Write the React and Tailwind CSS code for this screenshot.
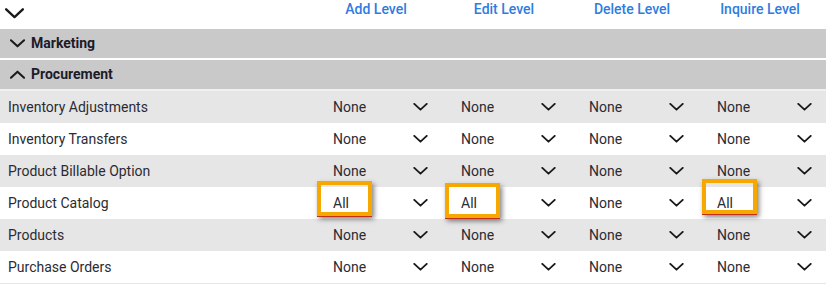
import React from 'react';

const FONT = { fontFamily: 'Roboto, "Liberation Sans", sans-serif' };

const LEVELS = ['Add Level', 'Edit Level', 'Delete Level', 'Inquire Level'];

const ROWS = [
    { name: 'Inventory Adjustments', values: ['None', 'None', 'None', 'None'] },
    { name: 'Inventory Transfers', values: ['None', 'None', 'None', 'None'] },
    { name: 'Product Billable Option', values: ['None', 'None', 'None', 'None'] },
    { name: 'Product Catalog', values: ['All', 'All', 'None', 'All'], marks: [[-8, -6], [-8, -4], null, [-7, -8]] },
    { name: 'Products', values: ['None', 'None', 'None', 'None'] },
    { name: 'Purchase Orders', values: ['None', 'None', 'None', 'None'] },
];

const Chevron = ({ up = false, className = '', width = 16, height = 9, stroke = 2 }) => (
    <svg width={width} height={height} viewBox="0 0 16 9" className={className} fill="none">
        <path
            d={up ? 'M1 8 L8 1.5 L15 8' : 'M1 1 L8 7.5 L15 1'}
            stroke="#1a1a1a"
            strokeWidth={stroke}
            strokeLinecap="round"
            strokeLinejoin="round"
        />
    </svg>
);

const Section = ({ title, open }) => (
    <div className="h-[29px] bg-[#c9c9c9] flex items-center pl-[10px] gap-[6px]">
        <Chevron up={open} width={15} height={9} stroke={2.2} />
        <span className="text-[14px] font-bold text-[#1b1b2b]">{title}</span>
    </div>
);

const Cell = ({ value, mark }) => (
    <div className="relative w-[128px] shrink-0 flex items-center justify-between pl-[8px] pr-[25px]">
        <span className="text-[14px] text-[#2b2b33]">{value}</span>
        <Chevron width={15} height={8} stroke={2.1} />
        {mark && (
            <div
                className="absolute w-[55px] h-[35px] border-4 border-[#f6a800] shadow-[2px_3px_5px_rgba(0,0,0,0.5)]"
                style={{ left: mark[0], top: mark[1] }}
            >
                <div className="absolute left-[-4px] right-[-4px] bottom-[-5px] h-[1px] bg-[#c0301a]" />
            </div>
        )}
    </div>
);

export default function App() {
    return (
        <div className="w-[826px] h-[284px] overflow-hidden bg-white" style={FONT}>
            {/* header */}
            <div className="h-[29px] flex">
                <div className="w-[325px] shrink-0 pl-[5px] pt-[8px]">
                    <Chevron width={19} height={11} stroke={2} />
                </div>
                {LEVELS.map(l => (
                    <div key={l} className="w-[128px] shrink-0">
                        <div className="w-[102px] text-center text-[14px] font-medium text-[#2f7ce0] leading-[18px]">{l}</div>
                    </div>
                ))}
            </div>

            <Section title="Marketing" />
            <div className="h-[2px] bg-white" />
            <Section title="Procurement" open />
            <div className="h-[2px] bg-[#f0f0f0]" />

            {ROWS.map((r, i) => (
                <div key={r.name} className={`h-[32px] flex ${i % 2 === 0 ? 'bg-[#e6e6e6]' : 'bg-white'}`}>
                    <div className="w-[325px] shrink-0 flex items-center pl-[8px] text-[14px] text-[#2b2b33]">{r.name}</div>
                    {r.values.map((v, j) => (
                        <Cell key={j} value={v} mark={r.marks && r.marks[j]} />
                    ))}
                </div>
            ))}
            <div className="h-[2px] bg-[#e6e6e6]" />
        </div>
    );
}
